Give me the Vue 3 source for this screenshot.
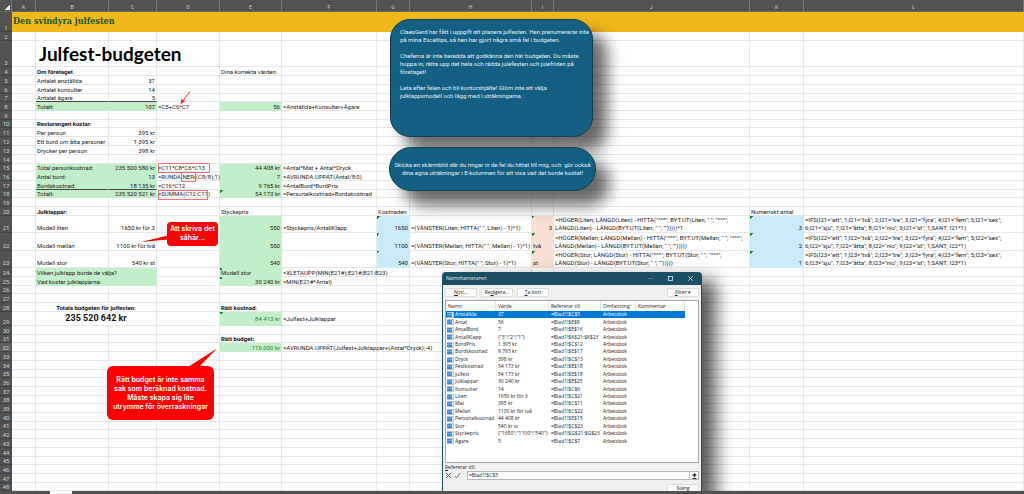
<script setup>
import { ref } from 'vue'

const columns = ['A', 'B', 'C', 'D', 'E', 'F', 'G', 'H', 'I', 'J', 'K', 'L']

const heights = [
  20, 9, 26, 9, 9, 9, 8, 9, 9, 8, 9, 9, 9, 9, 8, 9, 9, 8, 9, 9, 17, 18, 17, 9,
  9, 8, 9, 9, 14, 9, 8, 9, 9, 9, 8, 9, 9, 8, 9, 9, 8, 9, 9, 9, 8, 9, 9, 8
]

const cells = {
  A1: ['Den svindyra julfesten', 'banner'],
  B3: ['Julfest-budgeten', 'title'],
  B4: ['Om företaget', 'bold'], E4: ['Dina korrekta värden:'],
  B5: ['Antalet anställda'], C5: ['37', 'num'],
  B6: ['Antalet konsulter'], C6: ['14', 'num'],
  B7: ['Antalet ägare', 'rule'], C7: ['5', 'num rule'],
  B8: ['Totalt:', 'green'], C8: ['107', 'num green'], D8: ['=C5+C6*C7'],
  E8: ['56', 'num green'], F8: ['=Anställda+Konsulter+Ägare'],
  B10: ['Resturangen kostar:', 'bold'],
  B11: ['Per person'], C11: ['395 kr', 'num'],
  B12: ['Ett bord om åtta personer'], C12: ['1 395 kr', 'num'],
  B13: ['Drycker per person'], C13: ['398 kr', 'num'],
  B15: ['Total personkostnad:', 'green'], C15: ['235 500 580 kr', 'num green'], D15: ['=C11*C8*C6*C13'],
  E15: ['44 408 kr', 'num green'], F15: ['=Antal*Mat + Antal*Dryck'],
  B16: ['Antal bord:', 'green'], C16: ['13', 'num green'], D16: ['=RUNDA.NER((C8/8);1)'],
  E16: ['7', 'num green'], F16: ['=AVRUNDA.UPPÅT(Antal/8;0)'],
  B17: ['Bordskostnad:', 'green rule'], C17: ['18 135 kr', 'num green rule'], D17: ['=C16*C12'],
  E17: ['9 765 kr', 'num green'], F17: ['=AntalBord*BordPris'],
  B18: ['Totalt:', 'green'], C18: ['235 520 521 kr', 'num green'], D18: ['=SUMMA(C12:C17)'],
  E18: ['54 173 kr', 'num green flag'], F18: ['=Personalkostnad+Bordskostnad'],
  B20: ['Julklappar:', 'bold'], E20: ['Styckepris'], G20: ['Kostnaden'], K20: ['Numeriskt antal'],
  B21: ['Modell liten'], C21: ['1650 kr för 3', 'num'], E21: ['550', 'num green'], F21: ['=Styckepris/AntallKlapp'],
  G21: ['1650', 'num sky flag'], I21: ['3', 'num peach flag'], K21: ['3', 'num sky flag'],
  B22: ['Modell mellan'], C22: ['1100 kr för två', 'num'], E22: ['550', 'num green'],
  G22: ['1100', 'num sky flag'], I22: ['två', 'peach flag'], K22: ['2', 'num sky flag'],
  B23: ['Modell stor'], C23: ['540 kr st', 'num'], E23: ['540', 'num green'],
  G23: ['540', 'num sky flag'], I23: ['st', 'peach flag'], K23: ['1', 'num sky flag'],
  B24: ['Vilken julklapp borde de välja?', 'green'], C24: ['', 'green'],
  E24: ['Modell stor', 'green flag'], F24: ['=XLETAUPP(MIN(E21#);E21#;B21:B23)'],
  B25: ['Vad kostar julklapparna:', 'green'], C25: ['', 'green'],
  E25: ['30 240 kr', 'num green flag'], F25: ['=MIN(E21#*Antal)'],
  B28: ['Totala budgeten för julfesten:', 'bold center'], E28: ['Rätt kostnad:', 'bold'],
  B29: ['235 520 642 kr', 'total center'], E29: ['84 413 kr', 'num green flag answer'], F29: ['=Julfest+Julklappar', 'middle'],
  E31: ['Rätt budget:', 'bold'],
  E32: ['110 000 kr', 'num green answer'], F32: ['=AVRUNDA.UPPÅT(Julfest+Julklappar+(Antal*Dryck);-4)']
}

const models = [[21, 'Liten', '*1'], [22, 'Mellan', ''], [23, 'Stor', '']]
models.forEach(([row, name, tail]) => {
  cells['H' + row] = [`=(VÄNSTER(${name}; HITTA(" "; ${name}) - 1)*1)`]
  cells['J' + row] = [
    `=HÖGER(${name}; LÄNGD(${name}) - HITTA("^^^"; BYT.UT(${name}; " "; "^^^";\n` +
    `LÄNGD(${name}) - LÄNGD(BYT.UT(${name}; " "; "")))))${tail}`
  ]
  const i = 'I' + row
  cells['L' + row] = [
    `=IFS(${i}="ett"; 1;${i}="två"; 2;${i}="tre"; 3;${i}="fyra"; 4;${i}="fem"; 5;${i}="sex";\n` +
    `6;${i}="sju"; 7;${i}="åtta"; 8;${i}="nio"; 9;${i}="st"; 1;SANT; ${i}*1)`
  ]
})

const isMerged = (row) => row === 28 || row === 29
const columnsFor = (row) => columns.filter((c) => !(c === 'C' && isMerged(row)))
const spanFor = (row, col) => (col === 'B' && isMerged(row) ? 2 : 1)

const names = [
  ['Anställda', '37', '=Blad1!$C$5'],
  ['Antal', '56', '=Blad1!$E$8'],
  ['AntalBord', '7', '=Blad1!$E$16'],
  ['AntallKlapp', '{"3";"2";"1"}', '=Blad1!$K$21:$K$23'],
  ['BordPris', '1 395 kr', '=Blad1!$C$12'],
  ['Bordskostnad', '9 765 kr', '=Blad1!$E$17'],
  ['Dryck', '398 kr', '=Blad1!$C$13'],
  ['Festkostnad', '54 173 kr', '=Blad1!$E$18'],
  ['Julfest', '54 173 kr', '=Blad1!$E$18'],
  ['Julklappar', '30 240 kr', '=Blad1!$E$25'],
  ['Konsulter', '14', '=Blad1!$C$6'],
  ['Liten', '1650 kr för 3', '=Blad1!$C$21'],
  ['Mat', '395 kr', '=Blad1!$C$11'],
  ['Mellan', '1100 kr för två', '=Blad1!$C$22'],
  ['Personalkostnad', '44 408 kr', '=Blad1!$E$15'],
  ['Stor', '540 kr st', '=Blad1!$C$23'],
  ['Styckepris', '{"1650";"1100";"540"}', '=Blad1!$G$21:$G$23'],
  ['Ägare', '5', '=Blad1!$C$7']
]
const selected = ref(0)
const reference = ref('=Blad1!$C$5')
const pick = (index) => {
  selected.value = index
  reference.value = names[index][2]
}
</script>

<template>
  <div class="page">
    <main class="workspace">
      <table class="sheet">
        <colgroup>
          <col class="w-head">
          <col v-for="c in columns" :key="c" :class="'w-' + c">
        </colgroup>
        <thead>
          <tr>
            <th class="corner" scope="col" aria-label="Markera allt"></th>
            <th v-for="c in columns" :key="c" scope="col">{{ c }}</th>
          </tr>
        </thead>
        <tbody>
          <tr v-for="(h, i) in heights" :key="i" :class="'row-' + (i + 1)" :style="{ height: h + 'px' }">
            <th scope="row">{{ i + 1 }}</th>
            <td
              v-for="c in columnsFor(i + 1)"
              :key="c"
              :colspan="spanFor(i + 1, c)"
              :class="cells[c + (i + 1)]?.[1]"
            >{{ cells[c + (i + 1)]?.[0] }}</td>
          </tr>
        </tbody>
      </table>

      <svg class="marks" width="240" height="430" viewBox="0 0 240 430" aria-hidden="true">
        <g fill="none" stroke="#f07070" stroke-width="1">
          <rect x="158.5" y="163.5" width="51" height="9" />
          <rect x="181.5" y="172.5" width="14" height="9" />
          <rect x="158.5" y="190.5" width="49" height="9" />
        </g>
        <path d="M190 91.500 L183 100.500" stroke="#f22" stroke-width="1" />
        <path d="M180.500 104 L181.500 99 L185 101.500 Z" fill="#f11" />
        <path d="M141 242 L168 235.500 L168 239.500 Z" fill="#fe0000" />
        <path d="M217 348.500 L188 367 L199 367 Z" fill="#fe0000" />
      </svg>
      <p class="callout small">Att skriva det<br>såhär...</p>
      <p class="callout large">Rätt budget är inte samma<br>sak som beräknad kostnad.<br>Måste skapa sig lite<br>utrymme för överraskningar</p>

      <section class="note brief">
        <p>ClaesGerd har fått i uppgift att planera julfesten. Hen prenumererar inte<br>på mina Exceltips, så hen har gjort några små fel i budgeten.</p>
        <p>Cheferna är inte beredda att godkänna den här budgeten. Du måste<br>hoppa in, rätta upp det hela och rädda julefesten och julefriden på<br>företaget!</p>
        <p>Leta efter felen och bli kontorshjälte! Glöm inte att välja<br>julklappsmodell och lägg med i uträkningarna.</p>
      </section>
      <section class="note task">
        <p>Skicka en skärmbild där du ringar in de fel du hittat till mig, och&nbsp; gör också<br>dina egna uträkningar i E-kolumnen för att visa vad det borde kostat!</p>
      </section>

      <section class="dialog" role="dialog" aria-labelledby="dialog-title">
        <header class="titlebar">
          <h2 id="dialog-title">Namnhanteraren</h2>
          <button type="button" class="faded" aria-label="Minimera"><svg width="5" height="5" viewBox="0 0 5 5"><path d="M0 2.500H5" stroke="currentColor" /></svg></button>
          <button type="button" aria-label="Maximera"><svg width="5" height="5" viewBox="0 0 5 5"><rect x=".5" y=".5" width="4" height="4" fill="none" stroke="currentColor" stroke-width=".8" /></svg></button>
          <button type="button" aria-label="Stäng fönstret"><svg width="5" height="5" viewBox="0 0 5 5"><path d="M.3.3L4.700 4.700M4.700.3L.3 4.700" stroke="currentColor" stroke-width=".8" /></svg></button>
        </header>
        <div class="content">
          <div class="toolbar">
            <button type="button" class="push"><u>N</u>ytt...</button>
            <button type="button" class="push">Re<u>d</u>igera...</button>
            <button type="button" class="push"><u>T</u>a bort</button>
            <button type="button" class="push last"><u>F</u>ilter ▾</button>
          </div>
          <div class="list">
            <table class="names">
              <colgroup><col class="n-name"><col class="n-value"><col class="n-ref"><col class="n-scope"><col class="n-note"></colgroup>
              <thead>
                <tr><th>Namn</th><th>Värde</th><th>Refererar till</th><th>Omfattning</th><th>Kommentar</th></tr>
              </thead>
              <tbody>
                <tr v-for="(n, i) in names" :key="n[0]" :class="{ selected: i === selected }" @click="pick(i)">
                  <td>
                    <svg class="tag" width="7" height="6" viewBox="0 0 7 6" aria-hidden="true">
                      <rect width="7" height="6" fill="#b9c0c6" />
                      <rect y="1" width="5" height="4" fill="#2f8fd8" />
                      <path d="M0 2.500H5" stroke="#8fc3ea" stroke-width=".6" />
                      <rect x="5" y="1" width="1" height="4" fill="#e9eef2" />
                    </svg>{{ n[0] }}
                  </td>
                  <td>{{ n[1] }}</td>
                  <td>{{ n[2] }}</td>
                  <td>Arbetsbok</td>
                  <td></td>
                </tr>
              </tbody>
            </table>
          </div>
          <label for="reference"><u>R</u>efererar till:</label>
          <div class="editor">
            <button type="button" class="glyph" aria-label="Avbryt"><svg width="7" height="7" viewBox="0 0 7 7"><path d="M1 1L6 6M6 1L1 6" stroke="#555" /></svg></button>
            <button type="button" class="glyph" aria-label="Godkänn"><svg width="7" height="7" viewBox="0 0 7 7"><path d="M1 4L2.600 6L6 1" fill="none" stroke="#777" /></svg></button>
            <div class="field">
              <input id="reference" v-model="reference" type="text">
              <button type="button" class="collapse" aria-label="Komprimera dialogruta"><svg width="5" height="6" viewBox="0 0 5 6"><path d="M2.500 0L5 2.500H3.200V4H1.800V2.500H0Z M.5 5H4.500V6H.5Z" fill="#222" /></svg></button>
            </div>
          </div>
          <div class="actions"><button type="button" class="push">Stäng</button></div>
        </div>
      </section>
    </main>
    <footer class="tabs"><span class="tab"></span></footer>
  </div>
</template>

<style>
body {
  margin: 0;
  overflow: hidden;
}
</style>

<style scoped>
.page {
  display: flex;
  flex-direction: column;
  min-height: 100vh;
  background: #525252;
  color: #222;
  font-family: Roboto, "Liberation Sans", sans-serif;
  font-size: 6px;
}
.workspace {
  position: relative;
  overflow: hidden;
  background: #fff;
}
button {
  padding: 0;
  border: 0;
  background: none;
  color: inherit;
  font: inherit;
}

/* Spreadsheet */
.sheet {
  width: 100%;
  table-layout: fixed;
  border-collapse: separate;
  border-spacing: 0;
  line-height: 7px;
}
.w-head { width: 12px; }
.w-A { width: 24px; }
.w-B { width: 73px; }
.w-C { width: 48px; }
.w-D { width: 63px; }
.w-E { width: 62px; }
.w-F { width: 95px; }
.w-G { width: 33px; }
.w-H { width: 122px; }
.w-I { width: 22px; }
.w-J { width: 196px; }
.w-K { width: 54px; }
.sheet th,
.sheet td {
  box-sizing: border-box;
  padding: 0 1px;
  white-space: pre;
  vertical-align: bottom;
}
.sheet th {
  padding: 0;
  background: #525252;
  color: #d0d0d0;
  font-weight: 400;
  text-align: center;
}
.sheet thead th {
  height: 12px;
  padding-top: 3px;
  border-right: 1px solid #777;
  border-bottom: 1px solid #6d675a;
  font-size: 5px;
}
.sheet thead .corner {
  background: linear-gradient(135deg, transparent 50%, #e8e8e8 50%) 5px 5px / 5px 5px no-repeat #525252;
}
.sheet tbody th {
  border-bottom: 1px solid #444;
}
.sheet td {
  border-right: 1px solid #e8e8e8;
  border-bottom: 1px solid #e8e8e8;
  text-align: left;
}
.sheet .row-1 td {
  border-color: #f0b81c;
  background: #f0b81c;
}
.sheet .row-32 th {
  background: #606060;
  border-right: 1px solid #217346;
}
.sheet .row-21,
.sheet .row-22,
.sheet .row-23 {
  line-height: 8px;
}
.sheet .banner {
  color: #1c5a2c;
  font: 700 9px/19px "DejaVu Serif Condensed", "DejaVu Serif", serif;
}
.sheet .title {
  padding-left: 3px;
  color: #000;
  font-family: Lato, "Liberation Sans", sans-serif;
  font-size: 19px;
  font-weight: 700;
  line-height: 24px;
}
.sheet .bold {
  color: #111;
  font-weight: 700;
}
.sheet .num { text-align: right; }
.sheet .center { text-align: center; }
.sheet .total {
  color: #111;
  font-size: 9px;
  font-weight: 700;
  line-height: 13px;
}
.sheet .green {
  border-color: #c1efc9;
  background-color: #c1efc9;
}
.sheet .sky {
  border-color: #c9ebfa;
  background-color: #c9ebfa;
}
.sheet .peach {
  border-color: #fae0d4;
  background-color: #fae0d4;
}
.sheet .rule { border-bottom-color: #444; }
.sheet .flag {
  background-image: linear-gradient(135deg, #158a22 50%, transparent 50%);
  background-size: 3px 3px;
  background-repeat: no-repeat;
}
.sheet .answer {
  color: #2f7d3c;
  vertical-align: middle;
}
.sheet .middle { vertical-align: middle; }

/* Drawings over the sheet */
.marks {
  position: absolute;
  top: 0;
  left: 0;
}
.callout {
  position: absolute;
  box-sizing: border-box;
  margin: 0;
  background: #fe0000;
  color: #fff;
  font-family: Inter, "Liberation Sans", sans-serif;
  font-size: 7px;
  font-weight: 600;
  line-height: 9px;
  text-align: center;
  white-space: nowrap;
}
.callout.small {
  top: 222px;
  left: 167px;
  width: 51px;
  padding: 2px 0 4px;
  border-radius: 4px;
}
.callout.large {
  top: 366px;
  left: 107px;
  width: 107px;
  padding: 9px 4px;
  border-radius: 6px;
}
.note {
  position: absolute;
  box-sizing: border-box;
  border: 1px solid #0e3d54;
  background: #156082;
  box-shadow: 14px 14px 16px rgba(0, 0, 0, 0.6);
  color: #e4eff4;
  line-height: 8px;
  white-space: nowrap;
}
.note p { margin: 0 0 8px; }
.note.brief {
  top: 19px;
  left: 390px;
  width: 203px;
  height: 118px;
  padding: 8px 9px;
  border-radius: 20px;
}
.note.task {
  top: 147px;
  left: 389px;
  width: 207px;
  padding: 13px 0;
  border-radius: 22px;
  text-align: center;
}
.note.task p { margin: 0; }

/* Name manager */
.dialog {
  position: absolute;
  top: 272px;
  left: 442px;
  box-sizing: border-box;
  width: 260px;
  border: 1px solid #1b4f63;
  border-top: 0;
  border-radius: 4px 4px 0 0;
  background: #f0f0f0;
  box-shadow: 14px 8px 18px rgba(0, 0, 0, 0.65);
  color: #222;
  font-family: "Open Sans", "Noto Sans", sans-serif;
  font-size: 5px;
  line-height: 7px;
}
.titlebar {
  display: flex;
  align-items: center;
  gap: 15px;
  height: 13px;
  padding: 0 8px 0 3px;
  border-radius: 3px 3px 0 0;
  background: #1b4f63;
  color: #e8eff2;
}
.titlebar h2 {
  flex: 1;
  margin: 0;
  font-size: 5px;
  font-weight: 400;
}
.titlebar button {
  display: flex;
}
.titlebar .faded { color: #4d7584; }
.content {
  display: flex;
  flex-direction: column;
  padding: 3px 2px 0;
}
.toolbar {
  display: flex;
  gap: 4px;
  margin-bottom: 3px;
}
.push {
  width: 32px;
  height: 9px;
  border: 1px solid #dcdcdc;
  border-radius: 1px;
  background: #fdfdfd;
  line-height: 7px;
}
.push.last { margin-left: auto; }
.list {
  height: 161px;
  border: 1px solid #a8a8a8;
  background: #fff;
}
.names {
  width: 239px;
  height: 144px;
  table-layout: fixed;
  border-collapse: separate;
  border-spacing: 0;
}
.n-name { width: 50px; }
.n-value { width: 53px; }
.n-ref { width: 52px; }
.n-scope { width: 35px; }
.names th,
.names td {
  padding: 0 0 0 2px;
  font-weight: 400;
  text-align: left;
  white-space: nowrap;
}
.names thead th {
  height: 10px;
  padding-left: 2px;
  border-right: 1px solid #e4e4e4;
  box-sizing: border-box;
}
.names td:first-child { padding-left: 1px; }
.names .selected {
  background: #0078d7;
  color: #fff;
}
.tag {
  margin-right: 1px;
  vertical-align: middle;
}
.content label {
  margin-top: 1px;
}
.editor {
  display: flex;
  align-items: center;
  gap: 2px;
}
.glyph {
  display: flex;
}
.field {
  display: flex;
  flex: 1;
  height: 9px;
  margin-left: 4px;
  box-sizing: border-box;
  border: 1px solid #b5b5b5;
  background: #fff;
}
.field input {
  flex: 1;
  min-width: 0;
  padding: 0 1px;
  border: 0;
  outline: 0;
  background: none;
  color: inherit;
  font: inherit;
}
.collapse {
  display: flex;
  align-items: center;
  justify-content: center;
  width: 9px;
  border-left: 1px solid #ccc;
}
.actions {
  display: flex;
  justify-content: flex-end;
  padding: 4px 0;
}

/* Sheet tab strip */
.tabs {
  display: flex;
  flex: 1;
  min-height: 3px;
  padding-left: 50px;
}
.tab {
  width: 22px;
  background: #fff;
}
</style>
